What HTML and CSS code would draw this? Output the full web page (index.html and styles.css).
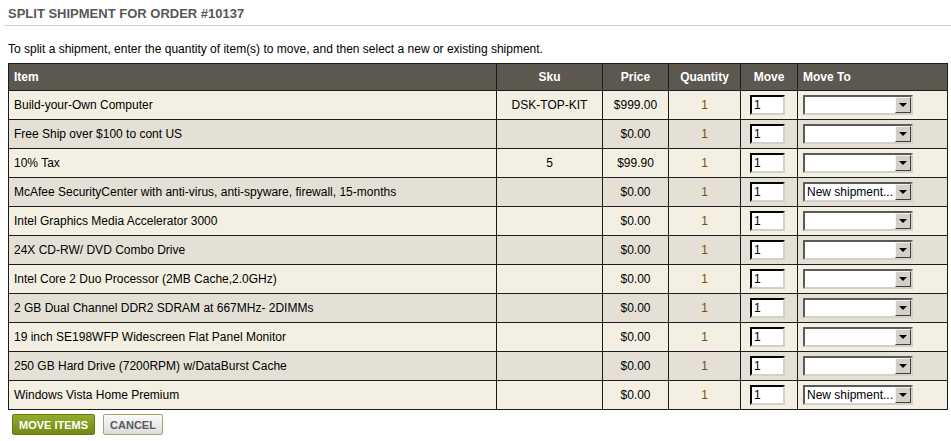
FILE: index.html
```html
<!DOCTYPE html>
<html lang="en">
<head>
    <meta charset="UTF-8">
    <title>Split Shipment</title>
    <link rel="stylesheet" href="styles.css">
</head>
<body>
    <div class="page-title">
        <h2>Split Shipment for Order #10137</h2>
    </div>

    <p class="intro">To split a shipment, enter the quantity of item(s) to move, and then select a new or existing shipment.</p>

    <table class="split-table">
        <colgroup>
            <col class="c-item">
            <col class="c-sku">
            <col class="c-price">
            <col class="c-qty">
            <col class="c-move">
            <col class="c-to">
        </colgroup>
        <thead>
            <tr>
                <th class="left">Item</th>
                <th>Sku</th>
                <th>Price</th>
                <th>Quantity</th>
                <th>Move</th>
                <th class="left">Move To</th>
            </tr>
        </thead>
        <tbody>
            <tr>
                <td>Build-your-Own Computer</td>
                <td class="center">DSK-TOP-KIT</td>
                <td class="center">$999.00</td>
                <td class="center qty">1</td>
                <td class="center"><input class="move-input" type="text" value="1"></td>
                <td><div class="fake-select"><span class="val"></span><span class="arrow"></span></div></td>
            </tr>
            <tr class="alt">
                <td>Free Ship over $100 to cont US</td>
                <td class="center"></td>
                <td class="center">$0.00</td>
                <td class="center qty">1</td>
                <td class="center"><input class="move-input" type="text" value="1"></td>
                <td><div class="fake-select"><span class="val"></span><span class="arrow"></span></div></td>
            </tr>
            <tr>
                <td>10% Tax</td>
                <td class="center">5</td>
                <td class="center">$99.90</td>
                <td class="center qty">1</td>
                <td class="center"><input class="move-input" type="text" value="1"></td>
                <td><div class="fake-select"><span class="val"></span><span class="arrow"></span></div></td>
            </tr>
            <tr class="alt">
                <td>McAfee SecurityCenter with anti-virus, anti-spyware, firewall, 15-months</td>
                <td class="center"></td>
                <td class="center">$0.00</td>
                <td class="center qty">1</td>
                <td class="center"><input class="move-input" type="text" value="1"></td>
                <td><div class="fake-select"><span class="val">New shipment...</span><span class="arrow"></span></div></td>
            </tr>
            <tr>
                <td>Intel Graphics Media Accelerator 3000</td>
                <td class="center"></td>
                <td class="center">$0.00</td>
                <td class="center qty">1</td>
                <td class="center"><input class="move-input" type="text" value="1"></td>
                <td><div class="fake-select"><span class="val"></span><span class="arrow"></span></div></td>
            </tr>
            <tr class="alt">
                <td>24X CD-RW/ DVD Combo Drive</td>
                <td class="center"></td>
                <td class="center">$0.00</td>
                <td class="center qty">1</td>
                <td class="center"><input class="move-input" type="text" value="1"></td>
                <td><div class="fake-select"><span class="val"></span><span class="arrow"></span></div></td>
            </tr>
            <tr>
                <td>Intel Core 2 Duo Processor (2MB Cache,2.0GHz)</td>
                <td class="center"></td>
                <td class="center">$0.00</td>
                <td class="center qty">1</td>
                <td class="center"><input class="move-input" type="text" value="1"></td>
                <td><div class="fake-select"><span class="val"></span><span class="arrow"></span></div></td>
            </tr>
            <tr class="alt">
                <td>2 GB Dual Channel DDR2 SDRAM at 667MHz- 2DIMMs</td>
                <td class="center"></td>
                <td class="center">$0.00</td>
                <td class="center qty">1</td>
                <td class="center"><input class="move-input" type="text" value="1"></td>
                <td><div class="fake-select"><span class="val"></span><span class="arrow"></span></div></td>
            </tr>
            <tr>
                <td>19 inch SE198WFP Widescreen Flat Panel Monitor</td>
                <td class="center"></td>
                <td class="center">$0.00</td>
                <td class="center qty">1</td>
                <td class="center"><input class="move-input" type="text" value="1"></td>
                <td><div class="fake-select"><span class="val"></span><span class="arrow"></span></div></td>
            </tr>
            <tr class="alt">
                <td>250 GB Hard Drive (7200RPM) w/DataBurst Cache</td>
                <td class="center"></td>
                <td class="center">$0.00</td>
                <td class="center qty">1</td>
                <td class="center"><input class="move-input" type="text" value="1"></td>
                <td><div class="fake-select"><span class="val"></span><span class="arrow"></span></div></td>
            </tr>
            <tr>
                <td>Windows Vista Home Premium</td>
                <td class="center"></td>
                <td class="center">$0.00</td>
                <td class="center qty">1</td>
                <td class="center"><input class="move-input" type="text" value="1"></td>
                <td><div class="fake-select"><span class="val">New shipment...</span><span class="arrow"></span></div></td>
            </tr>
        </tbody>
    </table>

    <div class="actions">
        <button class="btn btn-move">Move Items</button>
        <button class="btn btn-cancel">Cancel</button>
    </div>
</body>
</html>
```

FILE: styles.css
```css
body {
    font-family: Arial, "Liberation Sans", sans-serif;
    font-size: 12px;
    color: #000;
    margin: 0;
    padding: 0;
    background-color: #fff;
}

.page-title {
    margin-left: 4px;
    padding: 7px 0 5px 4px;
    border-bottom: 1px solid #cfcfcf;
}

.page-title h2 {
    margin: 0;
    font-size: 13px;
    line-height: 13px;
    font-weight: bold;
    text-transform: uppercase;
    color: #585858;
}

.intro {
    margin: 16px 0 7px 8px;
    line-height: 14px;
}

/* main table */
.split-table {
    margin-left: 8px;
    width: 939px;
    border-collapse: collapse;
    table-layout: fixed;
}

.c-item { width: 488px; }
.c-sku { width: 106px; }
.c-price { width: 66px; }
.c-qty { width: 72px; }
.c-move { width: 57px; }
.c-to { width: 150px; }

.split-table th,
.split-table td {
    border: 1px solid #1c1c1c;
    height: 28px;
    padding: 0 5px;
    white-space: nowrap;
}

.split-table th {
    background-color: #5c5850;
    color: #fff;
    font-weight: bold;
    text-align: center;
    height: 26px;
}

.split-table th.left {
    text-align: left;
}

.split-table tbody tr {
    background-color: #f3efe2;
}

.split-table tbody tr.alt {
    background-color: #e4e0d6;
}

.split-table td.center {
    text-align: center;
}

.split-table td.qty {
    color: #7e4f00;
}

.move-input {
    box-sizing: border-box;
    width: 35px;
    height: 20px;
    margin: 0;
    padding: 1px 2px;
    font-family: inherit;
    font-size: 12px;
    border: 2px inset #d4d0c8;
    border-top-color: #5a5a5a;
    border-left-color: #5a5a5a;
    background: #fff;
    display: block;
    margin-left: 4px;
}

.fake-select {
    box-sizing: border-box;
    display: flex;
    align-items: center;
    width: 110px;
    height: 20px;
    border: 2px solid #d4d0c8;
    border-top-color: #5a5a5a;
    border-left-color: #5a5a5a;
    background: #fff;
}

.fake-select .val {
    flex: 1;
    padding-left: 2px;
    font-size: 12px;
    overflow: hidden;
}

.fake-select .arrow {
    box-sizing: border-box;
    width: 16px;
    height: 16px;
    background: #d4d0c8;
    border: 1px solid;
    border-color: #f4f4f4 #404040 #404040 #f4f4f4;
    display: flex;
    align-items: center;
    justify-content: center;
}

.fake-select .arrow::after {
    content: "";
    border-left: 4px solid transparent;
    border-right: 4px solid transparent;
    border-top: 4px solid #000;
}

/* buttons */
.actions {
    display: flex;
    gap: 8px;
    margin: 4px 0 0 12px;
}

.btn {
    font-family: inherit;
    font-size: 11px;
    font-weight: bold;
    text-transform: uppercase;
    height: 21px;
    padding: 0 6px;
    cursor: pointer;
    border-radius: 2px;
}

.btn-move {
    color: #fff;
    background: linear-gradient(#93ad2c, #6f8a14);
    border: 1px solid #617a12;
}

.btn-cancel {
    color: #5a5a5a;
    background: linear-gradient(#fafafa, #dcdcdc);
    border: 1px solid #a3a56a;
}
```
